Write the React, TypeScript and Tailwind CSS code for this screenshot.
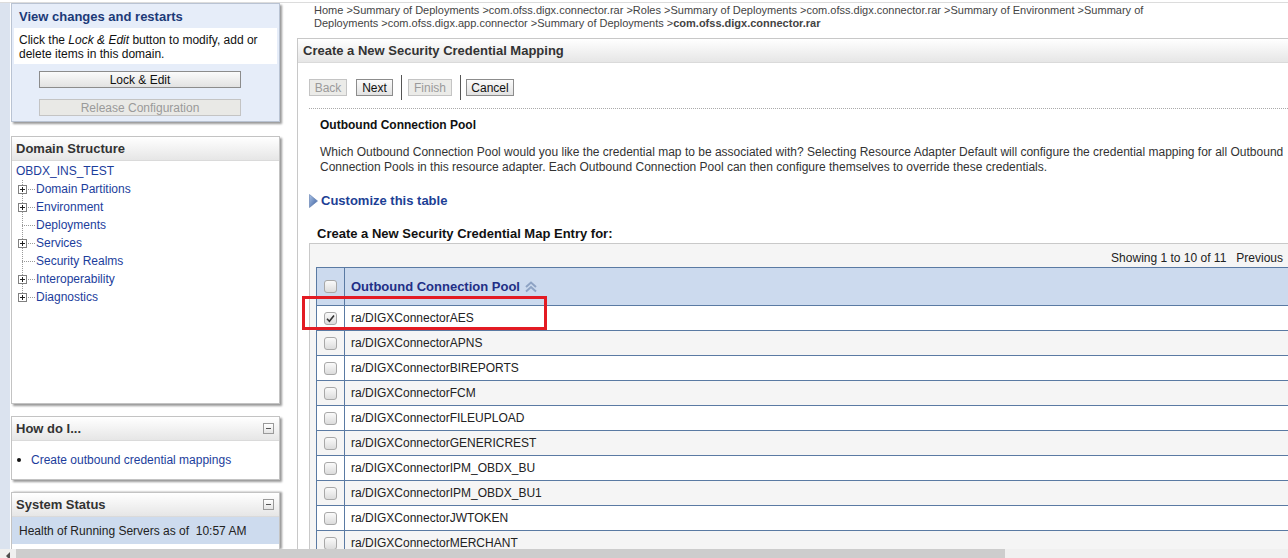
import React from "react";

const rows = [
  "ra/DIGXConnectorAES",
  "ra/DIGXConnectorAPNS",
  "ra/DIGXConnectorBIREPORTS",
  "ra/DIGXConnectorFCM",
  "ra/DIGXConnectorFILEUPLOAD",
  "ra/DIGXConnectorGENERICREST",
  "ra/DIGXConnectorIPM_OBDX_BU",
  "ra/DIGXConnectorIPM_OBDX_BU1",
  "ra/DIGXConnectorJWTOKEN",
  "ra/DIGXConnectorMERCHANT",
];

const tree = [
  { label: "Domain Partitions", plus: true },
  { label: "Environment", plus: true },
  { label: "Deployments", plus: false },
  { label: "Services", plus: true },
  { label: "Security Realms", plus: false },
  { label: "Interoperability", plus: true },
  { label: "Diagnostics", plus: true },
];

function TreeIcon({ plus, last }: { plus: boolean; last: boolean }) {
  return (
    <svg width="20" height="18" viewBox="0 0 20 18" className="shrink-0">
      <line x1="6.5" y1="0" x2="6.5" y2={last ? 9 : 18} stroke="#999" strokeDasharray="1 1" />
      <line x1="6" y1="9.5" x2="20" y2="9.5" stroke="#999" strokeDasharray="1 1" />
      {plus && (
        <g>
          <rect x="2.5" y="5.5" width="8" height="8" fill="#fff" stroke="#808080" />
          <line x1="4" y1="9.5" x2="9" y2="9.5" stroke="#222" />
          <line x1="6.5" y1="7" x2="6.5" y2="12" stroke="#222" />
        </g>
      )}
    </svg>
  );
}

function Minus() {
  return (
    <span className="w-[11px] h-[11px] border border-[#9a9a9a] bg-gradient-to-b from-white to-[#e4e4e4] flex items-center justify-center">
      <span className="w-[5px] h-px bg-[#555]" />
    </span>
  );
}

function Checkbox({ checked }: { checked?: boolean }) {
  return (
    <span className="w-[13px] h-[13px] rounded-[3px] border border-[#a8a8a8] bg-gradient-to-b from-[#fafafa] to-[#dcdcdc] flex items-center justify-center">
      {checked && (
        <svg width="9" height="9" viewBox="0 0 9 9">
          <path d="M1 4.8 L3.4 7.2 L8 1.5" fill="none" stroke="#333" strokeWidth="1.6" />
        </svg>
      )}
    </span>
  );
}

function Btn({ children, disabled, w }: { children: React.ReactNode; disabled?: boolean; w: string }) {
  return (
    <span
      className={
        disabled
          ? `${w} h-[17px] flex items-center justify-center border border-[#c4c4c4] bg-[#ebebe8] text-[#9a9a9a] text-[12px]`
          : `${w} h-[17px] flex items-center justify-center border border-[#8c8c8c] bg-gradient-to-b from-[#fbfbfb] to-[#e2e2e2] text-[#111] text-[12px]`
      }
    >
      {children}
    </span>
  );
}

export default function App() {
  return (
    <div className="relative w-[1288px] h-[558px] overflow-hidden bg-white flex flex-col font-['Liberation_Sans',Arial,sans-serif] text-[12px] text-[#333]">
      <div className="h-[2px] shrink-0" />
      <div className="h-px bg-[#dcdcdc] shrink-0" />
      <div className="flex flex-1 min-h-0">
        {/* left column */}
        <aside className="w-[290px] shrink-0 flex">
          <div className="w-[10px] bg-[#dbe3ef] shrink-0" />
          <div className="w-[269px] ml-px flex flex-col">
            {/* change center */}
            <div className="h-[119px] border border-[#b9c3d3] bg-[#e6edf9] shadow-[2px_2px_2px_rgba(0,0,0,0.4)] flex flex-col">
              <div className="pt-[5px] pl-[7px] h-[24px] leading-[16px] text-[13px] font-bold text-[#1c3a78]">View changes and restarts</div>
              <div className="mx-[2px] bg-white px-[5px] pt-[5px] pb-[3px] leading-[14px] text-[12px] text-[#111]">
                Click the <i>Lock &amp; Edit</i> button to modify, add or
                <br />
                delete items in this domain.
              </div>
              <div className="ml-[27px] mt-[7px] w-[202px] h-[17px] border border-[#8c8c8c] bg-gradient-to-b from-[#fbfbfb] to-[#e2e2e2] flex items-center justify-center text-[12px] text-[#111]">
                Lock &amp; Edit
              </div>
              <div className="ml-[27px] mt-[11px] w-[202px] h-[17px] border border-[#c4c4c4] bg-[#e9e9e6] flex items-center justify-center text-[12px] text-[#9a9a9a]">
                Release Configuration
              </div>
            </div>

            {/* domain structure */}
            <div className="mt-[14px] h-[268px] border border-[#c3c3c3] bg-white shadow-[2px_2px_2px_rgba(0,0,0,0.4)] flex flex-col">
              <div className="h-[24px] shrink-0 bg-gradient-to-b from-white to-[#e6e6e6] border-b border-[#dadada] flex items-center pl-[4px] text-[13px] font-bold text-[#333]">
                Domain Structure
              </div>
              <div className="pl-[4px] pt-px text-[12px] text-[#1c3d9c]">
                <div className="h-[18px] leading-[18px]">OBDX_INS_TEST</div>
                {tree.map((t, i) => (
                  <div key={t.label} className="h-[18px] flex items-center">
                    <TreeIcon plus={t.plus} last={i === tree.length - 1} />
                    <span className="leading-[18px]">{t.label}</span>
                  </div>
                ))}
              </div>
            </div>

            {/* how do I */}
            <div className="mt-[12px] h-[64px] border border-[#c3c3c3] bg-white shadow-[2px_2px_2px_rgba(0,0,0,0.4)] flex flex-col">
              <div className="h-[24px] shrink-0 bg-gradient-to-b from-white to-[#e6e6e6] border-b border-[#dadada] flex items-center justify-between pl-[4px] pr-[5px] text-[13px] font-bold text-[#333]">
                <span>How do I...</span>
                <Minus />
              </div>
              <div className="flex-1 flex items-center pl-[5px] text-[12px]">
                <span className="w-[4px] h-[4px] rounded-full bg-[#111] mr-[10px]" />
                <span className="text-[#1c3d9c]">Create outbound credential mappings</span>
              </div>
            </div>

            {/* system status */}
            <div className="mt-[12px] flex-1 border border-b-0 border-[#c3c3c3] bg-white shadow-[2px_0_2px_rgba(0,0,0,0.4)] flex flex-col">
              <div className="h-[24px] shrink-0 bg-gradient-to-b from-white to-[#e6e6e6] border-b border-[#dadada] flex items-center justify-between pl-[4px] pr-[5px] text-[13px] font-bold text-[#333]">
                <span>System Status</span>
                <Minus />
              </div>
              <div className="h-[27px] bg-[#cddbee] flex items-center pl-[7px] text-[12px] text-[#222] whitespace-pre">
                Health of Running Servers as of  10:57 AM
              </div>
            </div>
          </div>
        </aside>

        {/* main */}
        <main className="flex-1 min-w-0 overflow-hidden pl-[7px] flex flex-col">
          <div className="h-[35px] shrink-0 pl-[17px] pt-px leading-[13px] text-[11px] text-[#444] whitespace-nowrap">
            Home &gt;Summary of Deployments &gt;com.ofss.digx.connector.rar &gt;Roles &gt;Summary of Deployments &gt;com.ofss.digx.connector.rar &gt;Summary of Environment &gt;Summary of
            <br />
            Deployments &gt;com.ofss.digx.app.connector &gt;Summary of Deployments &gt;<b>com.ofss.digx.connector.rar</b>
          </div>

          <div className="flex-1 border-t border-l border-[#c8c8c8] flex flex-col min-h-0">
            <div className="h-[24px] shrink-0 bg-gradient-to-b from-white to-[#e6e6e6] border-b border-[#dadada] flex items-center pl-[5px] text-[13px] font-bold text-[#333]">
              Create a New Security Credential Mapping
            </div>
            <div className="pl-[11px] flex flex-col">
              <div className="mt-[12px] h-[25px] flex items-center">
                <Btn disabled w="w-[38px]">Back</Btn>
                <span className="ml-[9px]"><Btn w="w-[37px]">Next</Btn></span>
                <span className="ml-[8px] w-px h-[25px] bg-[#555]" />
                <span className="ml-[6px]"><Btn disabled w="w-[44px]">Finish</Btn></span>
                <span className="ml-[8px] w-px h-[25px] bg-[#555]" />
                <span className="ml-[5px]"><Btn w="w-[48px]">Cancel</Btn></span>
              </div>
              <div className="mt-[8px] border-t border-dotted border-[#aaa]" />

              <div className="pl-[11px] mt-[9px] h-[14px] leading-[14px] font-bold text-[12px] text-[#111]">Outbound Connection Pool</div>
              <div className="pl-[11px] mt-[13px] leading-[15px] text-[12px] text-[#333] whitespace-nowrap">
                Which Outbound Connection Pool would you like the credential map to be associated with? Selecting Resource Adapter Default will configure the credential mapping for all Outbound
                <br />
                Connection Pools in this resource adapter. Each Outbound Connection Pool can then configure themselves to override these credentials.
              </div>

              <div className="mt-[18px] h-[16px] flex items-center">
                <svg width="9" height="14" viewBox="0 0 9 14" className="shrink-0">
                  <defs>
                    <linearGradient id="tri" x1="0" y1="0" x2="1" y2="1">
                      <stop offset="0" stopColor="#a9c2e6" />
                      <stop offset="1" stopColor="#3c5f9e" />
                    </linearGradient>
                  </defs>
                  <path d="M0.5 0.5 L8.5 7 L0.5 13.5 Z" fill="url(#tri)" stroke="#5a78ad" strokeWidth="0.6" />
                </svg>
                <span className="ml-[3px] font-bold text-[13px] text-[#1d3f95] leading-[16px]">Customize this table</span>
              </div>

              <div className="pl-[8px] mt-[17px] h-[16px] leading-[16px] font-bold text-[13px] text-[#111]">
                Create a New Security Credential Map Entry for:
              </div>

              <div className="mt-px border-t border-l border-[#c9c9c9] bg-[#f5f5f5] pl-[6px] pt-[6px]">
                <div className="h-[16px] flex justify-end items-center pr-[5px] text-[12px] text-[#222] whitespace-pre">
                  Showing 1 to 10 of 11   Previous
                </div>
                <div className="mt-px border-t border-l border-[#5a7aa3] bg-white">
                  <div className="h-[38px] flex bg-[#ccdaee] border-b border-[#5a7aa3]">
                    <div className="w-[28px] shrink-0 border-r border-[#5a7aa3] flex items-center justify-center">
                      <Checkbox />
                    </div>
                    <div className="pl-[6px] flex items-center font-bold text-[13px] text-[#222f86]">
                      Outbound Connection Pool
                      <svg width="14" height="12" viewBox="0 0 14 12" className="ml-[4px]">
                        <path d="M2 6 L7 1.5 L12 6" fill="none" stroke="#8ea3c4" strokeWidth="2" />
                        <path d="M2 10.5 L7 6 L12 10.5" fill="none" stroke="#8ea3c4" strokeWidth="2" />
                      </svg>
                    </div>
                  </div>
                  {rows.map((r, i) => (
                    <div
                      key={r}
                      className={`h-[25px] flex border-b border-[#5a7aa3] ${i % 2 === 1 ? "bg-[#f5f5f5]" : "bg-white"}`}
                    >
                      <div className="w-[28px] shrink-0 border-r border-[#5a7aa3] flex items-center justify-center">
                        <Checkbox checked={i === 0} />
                      </div>
                      <div className="pl-[6px] flex items-center text-[12px] text-[#222]">{r}</div>
                    </div>
                  ))}
                </div>
              </div>
            </div>
          </div>
        </main>
      </div>

      {/* horizontal scrollbar */}
      <div className="h-[9px] shrink-0 bg-[#f0f0f0] flex">
        <div className="w-[16px] shrink-0 relative overflow-hidden">
          <svg width="16" height="9" viewBox="0 0 16 9">
            <path d="M10 3 L6 7 L10 11 Z" fill="#505050" />
          </svg>
        </div>
        <div className="w-[989px] bg-[#cdcdcd]" />
      </div>

      {/* red highlight */}
      <div className="absolute left-[302px] top-[296px] w-[245px] h-[34px] border-[3px] border-[#e31b23] pointer-events-none" />
    </div>
  );
}
